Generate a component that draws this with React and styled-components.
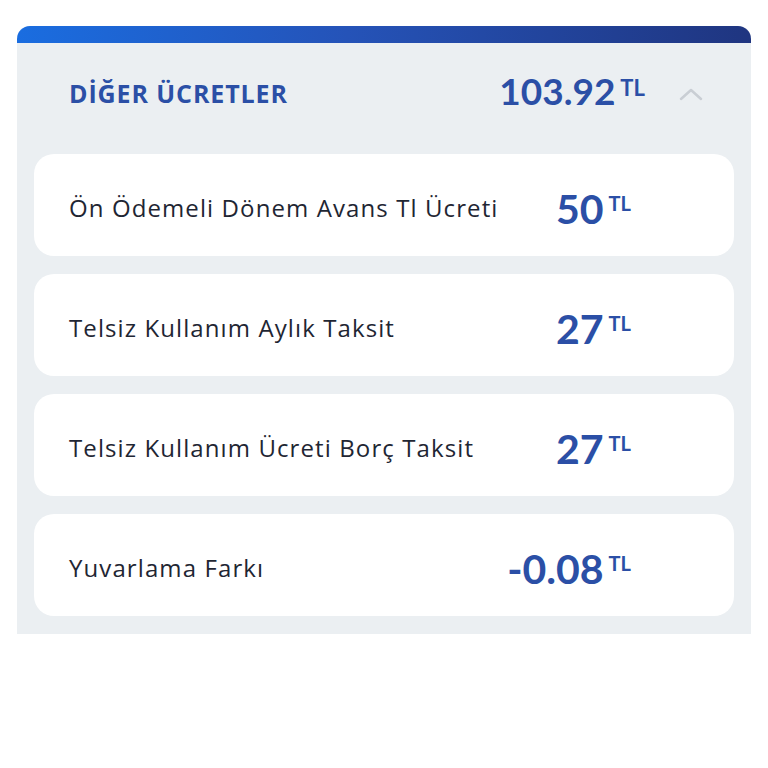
import React from 'react';
import styled, { createGlobalStyle } from 'styled-components';

const GlobalStyle = createGlobalStyle`
  html, body {
    margin: 0;
    padding: 0;
    background: #ffffff;
    font-family: "Lato", "Noto Sans", sans-serif;
  }
`;

const Page = styled.div`
  padding: 26px 17px 0 17px;
`;

const Panel = styled.section`
  background: #ebeff2;
  border-radius: 13px 13px 0 0;
  overflow: hidden;
`;

const TopBar = styled.div`
  height: 17px;
  background: linear-gradient(90deg, #1a6de0 0%, #2553b8 45%, #1f3580 100%);
`;

const Header = styled.div`
  display: flex;
  align-items: center;
  height: 94px;
  padding: 0 48px 0 52px;
`;

const Title = styled.h2`
  flex: 1;
  margin: 6px 0 0 0;
  font-family: "Open Sans", "Lato", sans-serif;
  font-size: 25px;
  font-weight: 700;
  color: #2b4fa6;
  letter-spacing: 0.9px;
`;

const Amount = styled.div`
  display: flex;
  align-items: flex-start;
  color: #2b4fa6;
`;

const Number = styled.span`
  font-size: ${(p) => p.$size}px;
  font-weight: 700;
  line-height: 1;
`;

const Currency = styled.span`
  font-size: ${(p) => p.$size}px;
  font-weight: 700;
  line-height: 1;
  margin-left: 5px;
  margin-top: 5px;
`;

const Chevron = styled.svg`
  width: 24px;
  height: 14px;
  margin: 8px 0 0 34px;
`;

const List = styled.div`
  display: flex;
  flex-direction: column;
  gap: 18px;
  padding: 17px 17px 18px 17px;
`;

const Row = styled.div`
  display: flex;
  justify-content: space-between;
  align-items: center;
  height: 102px;
  padding: 0 103px 0 35px;
  background: #ffffff;
  border-radius: 20px;
`;

const Label = styled.span`
  font-family: "Open Sans", "Lato", sans-serif;
  font-size: 24px;
  letter-spacing: 1.1px;
  color: #1f2633;
  margin-top: 4px;
  white-space: nowrap;
`;

const Value = styled.div`
  display: flex;
  align-items: flex-start;
  color: #2b4fa6;
  margin-top: 6px;
`;

const fees = [
  { label: 'Ön Ödemeli Dönem Avans Tl Ücreti', value: '50' },
  { label: 'Telsiz Kullanım Aylık Taksit', value: '27' },
  { label: 'Telsiz Kullanım Ücreti Borç Taksit', value: '27' },
  { label: 'Yuvarlama Farkı', value: '-0.08' },
];

export default function App() {
  return (
    <Page>
      <GlobalStyle />
      <Panel>
        <TopBar />
        <Header>
          <Title>DİĞER ÜCRETLER</Title>
          <Amount>
            <Number $size={37}>103.92</Number>
            <Currency $size={22}>TL</Currency>
          </Amount>
          <Chevron viewBox="0 0 24 14">
            <path d="M2 12 L12 3 L22 12" fill="none" stroke="#c9ced4" strokeWidth="2.5" strokeLinecap="round" strokeLinejoin="round" />
          </Chevron>
        </Header>
        <List>
          {fees.map((f) => (
            <Row key={f.label}>
              <Label>{f.label}</Label>
              <Value>
                <Number $size={41}>{f.value}</Number>
                <Currency $size={20}>TL</Currency>
              </Value>
            </Row>
          ))}
        </List>
      </Panel>
    </Page>
  );
}
